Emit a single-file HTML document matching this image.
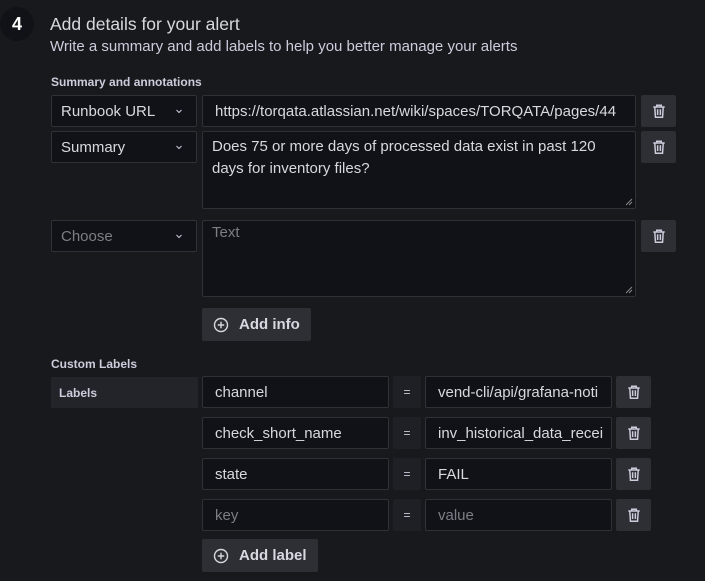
<!DOCTYPE html>
<html><head><style>
body{margin:0;width:705px;height:581px;background:#18191d;font-family:"Liberation Sans",sans-serif;color:#ccccdc;position:relative;overflow:hidden}
.a{position:absolute;box-sizing:border-box}
.in{background:#111217;border:1px solid #303136;border-radius:2px;font-size:15px;color:#d8d9e0;padding-left:12px;display:flex;align-items:center;white-space:nowrap;overflow:hidden}
.ta{align-items:flex-start;padding-top:4px;padding-left:9px;padding-right:25px;line-height:22px;white-space:normal}
.sel{justify-content:space-between;padding-right:12px;padding-left:9px}
.btn{background:#2d2f35;border-radius:2px;display:flex;align-items:center;justify-content:center}
.eq{background:#1f2025;border-radius:2px;display:flex;align-items:center;justify-content:center;font-size:12px}
.ab{background:#2d2f35;border-radius:2px;display:flex;align-items:center;font-size:15px;font-weight:bold;color:#d8d9e0;padding-left:11px;gap:10px}
.rh{position:absolute;right:2px;bottom:2px}
</style></head><body>
<div class="a" style="left:0px;top:7px;width:34px;height:34px;border-radius:50%;background:#111217;color:#fff;font-weight:bold;font-size:18px;display:flex;align-items:center;justify-content:center">4</div>
<div class="a" style="left:50px;top:14px;font-size:17.5px;color:#d8d9e0">Add details for your alert</div>
<div class="a" style="left:50px;top:38px;font-size:15px;color:#ccccdc">Write a summary and add labels to help you better manage your alerts</div>
<div class="a" style="left:51px;top:75px;font-size:12px;font-weight:bold;color:#ccccdc">Summary and annotations</div>

<svg width="0" height="0" style="position:absolute"><defs><symbol id="tr" viewBox="0 0 14 14"><path d="M2 3.5h10M5 3.5V2h4v1.5M3.3 3.5l.6 9h6.2l.6-9M5.8 5.5v5M8.2 5.5v5" fill="none" stroke="#ccccdc" stroke-width="1.3"/></symbol>
<symbol id="ch" viewBox="0 0 10 10"><path d="M2.5 4l2.5 2.5L7.5 4" fill="none" stroke="#ccccdc" stroke-width="1"/></symbol>
<symbol id="rs" viewBox="0 0 8 8"><path d="M1 7L7 1M4 7L7 4" stroke="#888" stroke-width="1"/></symbol>
<symbol id="pl" viewBox="0 0 16 16"><circle cx="8" cy="8" r="6.5" fill="none" stroke="#d8d9e0" stroke-width="1.4"/><path d="M8 4.8v6.4M4.8 8h6.4" stroke="#d8d9e0" stroke-width="1.4"/></symbol></defs></svg>

<div class="a in sel" style="left:51px;top:95px;width:146px;height:32px">Runbook URL<svg width="10" height="10"><use href="#ch"/></svg></div>
<div class="a in" style="left:202px;top:95px;width:434px;height:32px">https://torqata.atlassian.net/wiki/spaces/TORQATA/pages/44</div>
<div class="a btn" style="left:641px;top:95px;width:35px;height:32px"><svg width="16" height="16"><use href="#tr"/></svg></div>

<div class="a in sel" style="left:51px;top:131px;width:146px;height:32px">Summary<svg width="10" height="10"><use href="#ch"/></svg></div>
<div class="a in ta" style="left:202px;top:131px;width:434px;height:78px">Does 75 or more days of processed data exist in past 120 days for inventory files?<svg class="rh" width="8" height="8"><use href="#rs"/></svg></div>
<div class="a btn" style="left:641px;top:131px;width:35px;height:32px"><svg width="16" height="16"><use href="#tr"/></svg></div>

<div class="a in sel" style="left:51px;top:220px;width:146px;height:32px;color:#7c7e85">Choose<svg width="10" height="10"><use href="#ch"/></svg></div>
<div class="a in ta" style="left:202px;top:220px;width:434px;height:77px;color:#7c7e85;padding-top:1px">Text<svg class="rh" width="8" height="8"><use href="#rs"/></svg></div>
<div class="a btn" style="left:641px;top:220px;width:35px;height:32px"><svg width="16" height="16"><use href="#tr"/></svg></div>

<div class="a ab" style="left:202px;top:308px;width:109px;height:33px"><svg width="16" height="16"><use href="#pl"/></svg>Add info</div>

<div class="a" style="left:51px;top:357px;font-size:12px;font-weight:bold">Custom Labels</div>
<div class="a" style="left:51px;top:377px;width:147px;height:31px;background:#22242a;font-size:12px;font-weight:bold;padding-left:8px;display:flex;align-items:center">Labels</div>

<div class="a in" style="left:202px;top:376px;width:187px;height:32px">channel</div>
<div class="a eq" style="left:393px;top:376px;width:28px;height:32px">=</div>
<div class="a in" style="left:425px;top:376px;width:187px;height:32px">vend-cli/api/grafana-noti</div>
<div class="a btn" style="left:616px;top:376px;width:35px;height:32px"><svg width="16" height="16"><use href="#tr"/></svg></div>

<div class="a in" style="left:202px;top:417px;width:187px;height:32px">check_short_name</div>
<div class="a eq" style="left:393px;top:417px;width:28px;height:32px">=</div>
<div class="a in" style="left:425px;top:417px;width:187px;height:32px">inv_historical_data_recei</div>
<div class="a btn" style="left:616px;top:417px;width:35px;height:32px"><svg width="16" height="16"><use href="#tr"/></svg></div>

<div class="a in" style="left:202px;top:458px;width:187px;height:32px">state</div>
<div class="a eq" style="left:393px;top:458px;width:28px;height:32px">=</div>
<div class="a in" style="left:425px;top:458px;width:187px;height:32px">FAIL</div>
<div class="a btn" style="left:616px;top:458px;width:35px;height:32px"><svg width="16" height="16"><use href="#tr"/></svg></div>

<div class="a in" style="left:202px;top:499px;width:187px;height:32px;color:#7c7e85">key</div>
<div class="a eq" style="left:393px;top:499px;width:28px;height:32px">=</div>
<div class="a in" style="left:425px;top:499px;width:187px;height:32px;color:#7c7e85">value</div>
<div class="a btn" style="left:616px;top:499px;width:35px;height:32px"><svg width="16" height="16"><use href="#tr"/></svg></div>

<div class="a ab" style="left:202px;top:539px;width:116px;height:33px"><svg width="16" height="16"><use href="#pl"/></svg>Add label</div>
</body></html>
